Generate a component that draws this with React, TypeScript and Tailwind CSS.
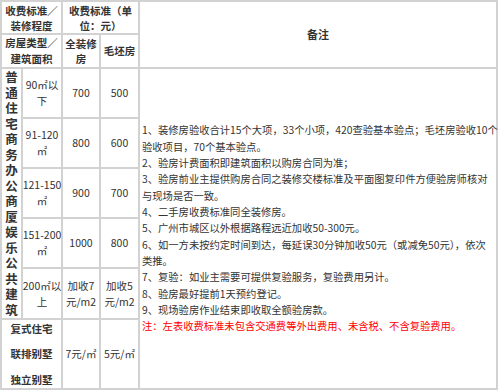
import React from "react";

const font = { fontFamily: '"Noto Sans CJK SC", "Noto Sans", sans-serif' };

function Cell({
  className = "",
  children,
}: {
  className?: string;
  children?: React.ReactNode;
}) {
  return (
    <div
      className={`bg-white flex flex-col items-center justify-center text-center text-[#333] whitespace-nowrap ${className}`}
    >
      {children}
    </div>
  );
}

const vertical = "普通住宅商务办公商厦娱乐公共建筑".split("");

const notes = [
  "1、装修房验收合计15个大项，33个小项，420查验基本验点；毛坯房验收10个",
  "验收项目，70个基本验点。",
  "2、验房计费面积即建筑面积以购房合同为准；",
  "3、验房前业主提供购房合同之装修交楼标准及平面图复印件方便验房师核对",
  "与现场是否一致。",
  "4、二手房收费标准同全装修房。",
  "5、广州市城区以外根据路程远近加收50-300元。",
  "6、如一方未按约定时间到达，每延误30分钟加收50元（或减免50元），依次",
  "类推。",
  "7、复验：如业主需要可提供复验服务，复验费用另计。",
  "8、验房最好提前1天预约登记。",
  "9、现场验房作业结束即收取全额验房款。",
];

const rows = [
  { area: ["90㎡以", "下"], a: ["700"], b: ["500"] },
  { area: ["91-120", "㎡"], a: ["800"], b: ["600"] },
  { area: ["121-150", "㎡"], a: ["900"], b: ["700"] },
  { area: ["151-200", "㎡"], a: ["1000"], b: ["800"] },
  { area: ["200㎡以", "上"], a: ["加收7", "元/m2"], b: ["加收5", "元/m2"] },
];

const rowStart = [
  "row-start-3",
  "row-start-4",
  "row-start-5",
  "row-start-6",
  "row-start-7",
];

export default function App() {
  return (
    <div className="w-[500px] h-[391px] bg-white overflow-hidden" style={font}>
      <div className="grid w-max grid-cols-[19px_38px_36px_37px_356px] grid-rows-[31px_32px_48px_48px_48px_48px_49px_68px] gap-[2px] p-[2px] bg-[#d2d2d2]">
        <Cell className="col-start-1 col-span-2 row-start-1 font-bold text-[10.5px] leading-[15px]">
          <div>收费标准／</div>
          <div>装修程度</div>
        </Cell>
        <Cell className="col-start-3 col-span-2 row-start-1 font-bold text-[10.5px] leading-[15px]">
          <div>收费标准（单</div>
          <div>位：元）</div>
        </Cell>
        <Cell className="col-start-5 row-start-1 row-span-2 font-bold text-[11px]">
          <div>备注</div>
        </Cell>
        <Cell className="col-start-1 col-span-2 row-start-2 font-bold text-[10.5px] leading-[16px]">
          <div>房屋类型／</div>
          <div>建筑面积</div>
        </Cell>
        <Cell className="col-start-3 row-start-2 font-bold text-[10.5px] leading-[15px]">
          <div>全装修</div>
          <div>房</div>
        </Cell>
        <Cell className="col-start-4 row-start-2 font-bold text-[10.5px]">
          <div>毛坯房</div>
        </Cell>

        <Cell className="col-start-1 row-start-3 row-span-5 justify-start font-bold text-[12.5px] leading-[15.5px]">
          {vertical.map((c, i) => (
            <div key={i} className="h-[15.5px] leading-[15.5px]">
              {c}
            </div>
          ))}
        </Cell>

        {rows.map((r, i) => (
          <React.Fragment key={i}>
            <Cell
              className={`col-start-2 ${rowStart[i]} text-[10.5px] leading-[16px]`}
            >
              {r.area.map((t, j) => (
                <div key={j}>{t}</div>
              ))}
            </Cell>
            <Cell
              className={`col-start-3 ${rowStart[i]} text-[10.5px] leading-[16px]`}
            >
              {r.a.map((t, j) => (
                <div key={j}>{t}</div>
              ))}
            </Cell>
            <Cell
              className={`col-start-4 ${rowStart[i]} text-[10.5px] leading-[16px]`}
            >
              {r.b.map((t, j) => (
                <div key={j}>{t}</div>
              ))}
            </Cell>
          </React.Fragment>
        ))}

        <Cell className="col-start-1 col-span-2 row-start-8 font-bold text-[10.5px] leading-[25.5px]">
          <div>复式住宅</div>
          <div>联排别墅</div>
          <div>独立别墅</div>
        </Cell>
        <Cell className="col-start-3 row-start-8 text-[10.5px]">
          <div>7元/㎡</div>
        </Cell>
        <Cell className="col-start-4 row-start-8 text-[10.5px]">
          <div>5元/㎡</div>
        </Cell>

        <div className="col-start-5 row-start-3 row-span-6 bg-white flex flex-col justify-center pl-[2px] text-[10.3px] leading-[16.33px] text-[#333] whitespace-nowrap">
          {notes.map((n, i) => (
            <div key={i}>{n}</div>
          ))}
          <div className="text-[#ff0000]">
            注：左表收费标准未包含交通费等外出费用、未含税、不含复验费用。
          </div>
        </div>
      </div>
    </div>
  );
}
